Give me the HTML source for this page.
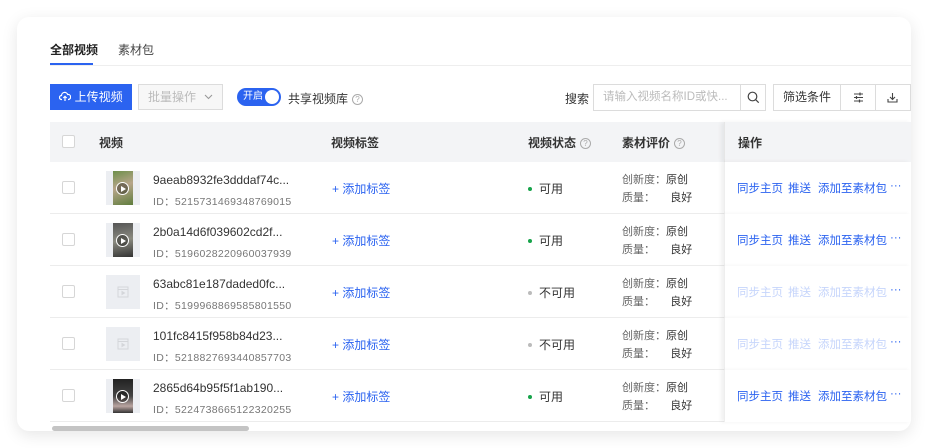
<!DOCTYPE html>
<html><head><meta charset="utf-8"><style>
*{box-sizing:border-box;margin:0;padding:0}
body{width:928px;height:448px;background:#fff;font-family:"Liberation Sans","Noto Sans CJK SC",sans-serif;font-size:12px;color:#333;position:relative;overflow:hidden}
.card{position:absolute;left:17px;top:17px;width:894px;height:414px;background:#fff;border-radius:12px;box-shadow:0 4px 16px rgba(0,0,0,0.10);overflow:hidden}
.abs{position:absolute}
.tab{position:absolute;top:24px;font-size:12px}
.hdr{position:absolute;left:33px;top:105px;width:861px;height:40px;background:#f3f4f6}
.row{position:absolute;left:33px;width:861px;height:52px;border-bottom:1px solid #ececec}
.cb{position:absolute;left:12px;width:13px;height:13px;border:1px solid #d6d6d6;border-radius:2px;background:#fff}
.th{position:absolute;top:12px;font-weight:bold;color:#333}
.q{display:inline-block;width:11px;height:11px;border:1px solid #aaa;border-radius:50%;font-size:8px;color:#aaa;text-align:center;line-height:9px;font-weight:normal;vertical-align:1px;margin-left:4px}
.thumb{position:absolute;left:56px;top:9px;width:34px;height:34px;background:#eceef2}
.img{position:absolute;left:7px;top:0;width:20px;height:34px}
.play{position:absolute;left:10px;top:11px;width:13px;height:13px;border-radius:50%;border:1.5px solid #fff;background:rgba(0,0,0,.35)}
.play:after{content:"";position:absolute;left:4px;top:2.5px;border-left:5px solid #fff;border-top:3px solid transparent;border-bottom:3px solid transparent}
.title{position:absolute;left:103px;top:11px;font-size:12px;color:#333}
.id{position:absolute;left:103px;top:32px;font-size:10.5px;color:#777;letter-spacing:.3px}
.tag{position:absolute;left:282px;top:18px;color:#2b63f0}
.st{position:absolute;left:478px;top:18px;color:#333}
.dot{display:inline-block;width:4px;height:4px;border-radius:50%;margin-right:7px;vertical-align:2px}
.ev{position:absolute;left:572px;top:9px;font-size:11px;color:#666;line-height:18px}
.ev b{font-weight:normal;color:#333}
.ops{position:absolute;left:674px;top:0;width:187px;height:52px;background:#fff;box-shadow:-3px 0 4px rgba(0,0,0,.06);border-left:1px solid #eee}
.ops span{position:absolute;top:18px;color:#2b63f0;font-size:11.5px}
.dis span{color:#c6d5fb}
</style></head><body>
<div class="card">
 <div class="tab" style="left:33px;font-weight:bold;color:#222">全部视频</div>
 <div class="abs" style="left:33px;top:46px;width:43px;height:2px;background:#2b63f0"></div>
 <div class="tab" style="left:101px;color:#444">素材包</div>
 <div class="abs" style="left:33px;top:48px;width:861px;height:1px;background:#eee"></div>

 <div class="abs" style="left:33px;top:67px;width:82px;height:26px;background:#2b63f0;color:#fff;line-height:26px;text-align:center">
  <svg width="12" height="11" viewBox="0 0 12 11" style="vertical-align:-1px"><path d="M3 8.5H2.5A2 2 0 0 1 2.5 4.5 3.2 3.2 0 0 1 8.7 3.5 2.5 2.5 0 0 1 9.5 8.5H9M6 10V5.5M4.3 7 6 5.3 7.7 7" fill="none" stroke="#fff" stroke-width="1.2"/></svg> 上传视频</div>
 <div class="abs" style="left:121px;top:67px;width:85px;height:26px;border:1px solid #dcdcdc;background:#f7f7f7;color:#bbb;line-height:24px;padding-left:9px">批量操作<svg class="abs" style="right:9px;top:9px" width="9" height="6"><path d="M1 1l3.5 3.5L8 1" fill="none" stroke="#999" stroke-width="1.1"/></svg></div>
 <div class="abs" style="left:220px;top:71px;width:44px;height:18px;border-radius:9px;background:#2b63f0;color:#fff;font-size:10px;line-height:18px;padding-left:6px"><span style="position:absolute;left:6px;top:0;line-height:18px">开启</span><div class="abs" style="right:2px;top:2px;width:14px;height:14px;border-radius:50%;background:#fff"></div></div>
 <div class="abs" style="left:271px;top:73px;color:#333">共享视频库<span class="q">?</span></div>

 <div class="abs" style="left:548px;top:73px;color:#333">搜索</div>
 <div class="abs" style="left:576px;top:67px;width:173px;height:27px;border:1px solid #dcdcdc;color:#bbb;line-height:25px;padding-left:9px;font-size:11.5px">请输入视频名称ID或快...
  <div class="abs" style="right:0;top:0;width:25px;height:25px;border-left:1px solid #dcdcdc"><svg class="abs" style="left:6px;top:6px" width="13" height="13"><circle cx="5.5" cy="5.5" r="4.3" fill="none" stroke="#444" stroke-width="1.2"/><path d="M8.7 8.7l3 3" stroke="#444" stroke-width="1.2"/></svg></div></div>
 <div class="abs" style="left:756px;top:67px;width:138px;height:27px;border:1px solid #dcdcdc;background:#fff">
  <div class="abs" style="left:0;top:0;width:67px;height:25px;line-height:25px;text-align:center;color:#333;border-right:1px solid #dcdcdc">筛选条件</div>
  <div class="abs" style="left:67px;top:0;width:35px;height:25px;border-right:1px solid #dcdcdc"><svg class="abs" style="left:12px;top:7px" width="11" height="11"><path d="M1 2h9M1 5.5h9M1 9h9" stroke="#444" stroke-width="1"/><path d="M7 0.5v3M3.5 4v3M6.5 7.5v3" stroke="#444" stroke-width="1.2"/></svg></div>
  <svg class="abs" style="left:113px;top:7px" width="11" height="11"><path d="M5.5 1v6M3 5l2.5 2.5L8 5M1 7v3h9V7" fill="none" stroke="#444" stroke-width="1.1"/></svg>
 </div>

 <div class="hdr">
  <div class="cb" style="top:13px"></div>
  <div class="th" style="left:49px">视频</div>
  <div class="th" style="left:281px">视频标签</div>
  <div class="th" style="left:478px">视频状态<span class="q">?</span></div>
  <div class="th" style="left:572px">素材评价<span class="q">?</span></div>
  <div class="abs" style="left:674px;top:0;width:187px;height:40px;background:#f3f4f6;box-shadow:-3px 0 4px rgba(0,0,0,.06);border-left:1px solid #e6e6e6"><div class="th" style="left:13px">操作</div></div>
 </div>

 <div class="row" style="top:145px"><div class="cb" style="top:19px"></div><div class="thumb"><div class="img" style="background:linear-gradient(160deg,#6d8f4a,#b7a58a 45%,#5f7d3d)"></div><div class="play"></div></div><div class="title">9aeab8932fe3dddaf74c...</div><div class="id">ID：5215731469348769015</div><div class="tag">+ 添加标签</div><div class="st"><span class="dot" style="background:#16a34a"></span>可用</div><div class="ev">创新度：<b>原创</b><br>质量：&nbsp;&nbsp;&nbsp;&nbsp;&nbsp;<b>良好</b></div><div class="ops"><span style="left:12px">同步主页</span><span style="left:63px">推送</span><span style="left:93px">添加至素材包</span><span style="left:165px">···</span></div></div>
 <div class="row" style="top:197px"><div class="cb" style="top:19px"></div><div class="thumb"><div class="img" style="background:linear-gradient(170deg,#555,#8a8a80 50%,#333)"></div><div class="play"></div></div><div class="title">2b0a14d6f039602cd2f...</div><div class="id">ID：5196028220960037939</div><div class="tag">+ 添加标签</div><div class="st"><span class="dot" style="background:#16a34a"></span>可用</div><div class="ev">创新度：<b>原创</b><br>质量：&nbsp;&nbsp;&nbsp;&nbsp;&nbsp;<b>良好</b></div><div class="ops"><span style="left:12px">同步主页</span><span style="left:63px">推送</span><span style="left:93px">添加至素材包</span><span style="left:165px">···</span></div></div>
 <div class="row" style="top:249px"><div class="cb" style="top:19px"></div><div class="thumb"><svg class="abs" style="left:11px;top:11px" width="12" height="12"><rect x="1" y="1" width="10" height="10" fill="none" stroke="#d4d6da"/><path d="M1 3.5h10M5 5.5v3l2.5-1.5z" stroke="#d4d6da" fill="#d4d6da"/></svg></div><div class="title">63abc81e187daded0fc...</div><div class="id">ID：5199968869585801550</div><div class="tag">+ 添加标签</div><div class="st"><span class="dot" style="background:#bbb"></span>不可用</div><div class="ev">创新度：<b>原创</b><br>质量：&nbsp;&nbsp;&nbsp;&nbsp;&nbsp;<b>良好</b></div><div class="ops dis"><span style="left:12px">同步主页</span><span style="left:63px">推送</span><span style="left:93px">添加至素材包</span><span style="left:165px;color:#2b63f0">···</span></div></div>
 <div class="row" style="top:301px"><div class="cb" style="top:19px"></div><div class="thumb"><svg class="abs" style="left:11px;top:11px" width="12" height="12"><rect x="1" y="1" width="10" height="10" fill="none" stroke="#d4d6da"/><path d="M1 3.5h10M5 5.5v3l2.5-1.5z" stroke="#d4d6da" fill="#d4d6da"/></svg></div><div class="title">101fc8415f958b84d23...</div><div class="id">ID：5218827693440857703</div><div class="tag">+ 添加标签</div><div class="st"><span class="dot" style="background:#bbb"></span>不可用</div><div class="ev">创新度：<b>原创</b><br>质量：&nbsp;&nbsp;&nbsp;&nbsp;&nbsp;<b>良好</b></div><div class="ops dis"><span style="left:12px">同步主页</span><span style="left:63px">推送</span><span style="left:93px">添加至素材包</span><span style="left:165px;color:#2b63f0">···</span></div></div>
 <div class="row" style="top:353px"><div class="cb" style="top:19px"></div><div class="thumb"><div class="img" style="background:linear-gradient(180deg,#222,#444 50%,#b9a4a0 80%,#333)"></div><div class="play"></div></div><div class="title">2865d64b95f5f1ab190...</div><div class="id">ID：5224738665122320255</div><div class="tag">+ 添加标签</div><div class="st"><span class="dot" style="background:#16a34a"></span>可用</div><div class="ev">创新度：<b>原创</b><br>质量：&nbsp;&nbsp;&nbsp;&nbsp;&nbsp;<b>良好</b></div><div class="ops"><span style="left:12px">同步主页</span><span style="left:63px">推送</span><span style="left:93px">添加至素材包</span><span style="left:165px">···</span></div></div>

 <div class="abs" style="left:35px;top:409px;width:197px;height:5px;border-radius:3px;background:#c4c4c4"></div>
</div>
</body></html>
